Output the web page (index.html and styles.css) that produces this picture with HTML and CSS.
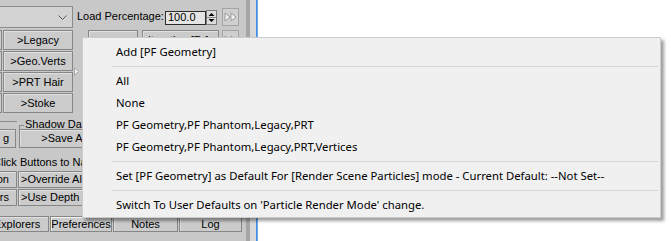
FILE: index.html
```html
<!DOCTYPE html>
<html>
<head>
<meta charset="utf-8">
<link rel="stylesheet" href="styles.css">
</head>
<body>
<div class="app">
  <div class="panel">
    <div class="row1">
      <div class="dropdown"><svg width="9" height="5" viewBox="0 0 9 5"><polyline points="0.5,0.5 4.5,4.5 8.5,0.5" fill="none" stroke="#5a5a5a" stroke-width="1"/></svg></div>
      <span class="lbl">Load Percentage:</span>
      <div class="num">100.0</div>
      <div class="spin"><svg width="9" height="13" viewBox="0 0 9 13"><polygon points="4.5,2 1.5,5 7.5,5" fill="#000"/><line x1="0" y1="6.5" x2="9" y2="6.5" stroke="#8a8a8a" stroke-width="1"/><polygon points="1.5,8 7.5,8 4.5,11" fill="#000"/></svg></div>
      <div class="ff"><svg width="13" height="10" viewBox="0 0 13 10"><polygon points="1,1 6,5 1,9" fill="#f2f2f2" stroke="#9a9a9a"/><polygon points="7,1 12,5 7,9" fill="#f2f2f2" stroke="#9a9a9a"/></svg></div>
    </div>
    <div class="block">
      <div class="pbtn r1"></div>
      <div class="pbtn r2"></div>
      <div class="pbtn r3"></div>
      <div class="pbtn r4"></div>
      <div class="btn main r1">&gt;Legacy</div>
      <div class="btn main r2">&gt;Geo.Verts</div>
      <div class="btn main r3">&gt;PRT Hair</div>
      <div class="btn main r4">&gt;Stoke</div>
      <div class="tri"><svg width="5" height="9" viewBox="0 0 5 9"><polygon points="0.5,0.5 4.5,4.5 0.5,8.5" fill="#efefef" stroke="#a8a8a8" stroke-width="1"/></svg></div>
      <div class="btn b5"></div>
      <div class="btn b7">Iteration [F..]</div>
      <div class="ff b9"><svg width="13" height="10" viewBox="0 0 13 10"><polygon points="1,1 6,5 1,9" fill="#f2f2f2" stroke="#9a9a9a"/><polygon points="7,1 12,5 7,9" fill="#f2f2f2" stroke="#9a9a9a"/></svg></div>
    </div>
    <div class="ghead">
      <div class="gh-left"></div>
      <div class="gh-corner"></div>
      <div class="gh-label">Shadow Data</div>
    </div>
    <div class="srow">
      <div class="btn part pg">g</div>
      <div class="btn b-save">&gt;Save Attributes</div>
    </div>
    <div class="note">Click Buttons to Navigate</div>
    <div class="row3">
      <div class="btn part p3">on</div>
      <div class="btn b-wide">&gt;Override All Settings</div>
    </div>
    <div class="row3">
      <div class="btn part p3">rs</div>
      <div class="btn b-wide">&gt;Use Depth Mode</div>
    </div>
    <div class="tabs">
      <div class="btn tab t-exp">Explorers</div>
      <div class="btn tab t-pref">Preferences</div>
      <div class="btn tab t-notes">Notes</div>
      <div class="btn tab t-log">Log</div>
    </div>
  </div>
  <div class="gut-dark"></div>
  <div class="gut-light"></div>
  <div class="blue"></div>
  <div class="white"></div>
</div>
<div class="menu">
  <div class="mi">Add [PF Geometry]</div>
  <div class="sep"></div>
  <div class="mi">All</div>
  <div class="mi">None</div>
  <div class="mi">PF Geometry,PF Phantom,Legacy,PRT</div>
  <div class="mi">PF Geometry,PF Phantom,Legacy,PRT,Vertices</div>
  <div class="sep"></div>
  <div class="mi">Set [PF Geometry] as Default For [Render Scene Particles] mode - Current Default: --Not Set--</div>
  <div class="sep"></div>
  <div class="mi">Switch To User Defaults on 'Particle Render Mode' change.</div>
</div>
</body>
</html>
```
FILE: styles.css
```css
* { box-sizing: border-box; }
html, body { margin: 0; padding: 0; }
body {
  width: 671px;
  height: 241px;
  overflow: hidden;
  background: #fff;
  position: relative;
  font-family: "Liberation Sans", Arial, sans-serif;
  font-size: 11px;
  color: #000;
}
.app { display: flex; height: 241px; }
.panel { width: 246px; flex: none; background: #c8c8c8; overflow: hidden; }
.gut-dark { width: 4px; flex: none; background: #a5a5a5; }
.gut-light { width: 6px; flex: none; background: #d8d8d8; }
.blue { width: 2px; flex: none; background: linear-gradient(to right, #2b80e0, #86b8ee); }
.white { flex: 1; background: #fff; }

/* row 1 */
.row1 { display: flex; align-items: flex-start; height: 30px; }
.dropdown {
  margin-left: -30px; width: 103px; height: 22px; margin-top: 6px;
  border: 1px solid #8c8c8c; background: #d2d2d2;
  display: flex; justify-content: flex-end; align-items: center; padding-right: 5px; flex: none;
}
.dropdown svg { display: block; }
.lbl { margin-left: 4px; width: 88px; margin-top: 9px; line-height: 14px; white-space: nowrap; flex: none; }
.num {
  width: 41px; height: 14px; margin-top: 11px; flex: none;
  border: 1px solid #2b2b2b; background: #e4e4e4;
  padding-left: 2px; line-height: 11px;
}
.spin {
  width: 11px; height: 15px; margin-top: 10px; flex: none;
  border: 1px solid #7a7a7a; background: #dcdcdc;
}
.spin svg { display: block; }
.ff {
  margin-left: 5px; width: 17px; height: 18px; margin-top: 8px; flex: none;
  border: 1px solid #a3a3a3; background: #cfcfcf;
  display: flex; align-items: center; justify-content: center;
}
.ff svg { display: block; }

/* buttons */
.btn {
  border: 1px solid #868686; background: #cbcbcb;
  box-shadow: inset 1px 1px 0 #e0e0e0;
  text-align: center; line-height: 18px; white-space: nowrap; overflow: hidden; flex: none;
}
.block {
  display: grid;
  grid-template-columns: 2px 1px 70px 15px 50px 4px 77px 3px 17px 1fr;
  grid-template-rows: repeat(4, 20px);
  row-gap: 1px;
}
.pbtn { grid-column: 1; border: 1px solid #868686; border-left: none; background: #cbcbcb; }
.main { grid-column: 3; }
.r1 { grid-row: 1; }
.r2 { grid-row: 2; }
.r3 { grid-row: 3; }
.r4 { grid-row: 4; }
.tri { grid-column: 4; grid-row: 1 / 5; display: flex; align-items: center; padding-left: 1px; }
.tri svg { display: block; }
.b5 { grid-column: 5; grid-row: 1; }
.b7 { grid-column: 7; grid-row: 1; text-align: left; padding-left: 5px; }
.b9 { grid-column: 9; grid-row: 1; margin: 0; width: 17px; height: 20px; }

/* group */
.ghead { display: flex; height: 16px; }
.gh-left { width: 17px; margin-top: 8px; height: 1px; border-top: 1px solid #8c8c8c; flex: none; }
.gh-corner { margin-left: 2px; width: 5px; margin-top: 12px; border-top: 1px solid #8c8c8c; border-left: 1px solid #8c8c8c; flex: none; }
.gh-label { line-height: 13px; margin-top: 5px; padding: 0 1px; white-space: nowrap; }

.srow { display: flex; height: 19px; }
.srow .btn { line-height: 17px; }
.pg { margin-left: -15px; width: 31px; text-align: right; padding-right: 6px; }
.b-save { margin-left: 3px; width: 125px; }

.note { height: 23px; padding-top: 7px; line-height: 14px; margin-left: -7px; white-space: nowrap; }

.row3 { display: flex; height: 17px; margin-bottom: 1px; }
.row3 .btn { line-height: 15px; }
.p3 { margin-left: -15px; width: 32px; text-align: right; padding-right: 7px; }
.b-wide { margin-left: 1px; width: 140px; text-align: left; padding-left: 2px; }

.tabs { display: flex; gap: 1px; height: 16px; margin-top: 10px; }
.tab { line-height: 14px; }
.t-exp { margin-left: -15px; width: 64px; }
.t-pref { width: 62px; box-shadow: inset 1px 1px 0 #f4f4f4; }
.t-notes { width: 65px; }
.t-log { width: 63px; }

/* context menu */
.menu {
  position: absolute; left: 82px; top: 37px;
  width: 579px; height: 181px;
  background: #f0f0f0; border: 1px solid #cccccc;
  box-shadow: 3px 3px 3px rgba(0, 0, 0, 0.38);
  padding: 3px 2px 1px 0;
  font-family: "Noto Sans", "Open Sans", sans-serif;
  font-size: 11.3px; color: #000;
}
.mi { height: 22px; line-height: 22px; padding-left: 33px; white-space: nowrap; }
.sep { height: 1px; background: #d4d4d4; margin: 3px 0 3px 29px; }
```
